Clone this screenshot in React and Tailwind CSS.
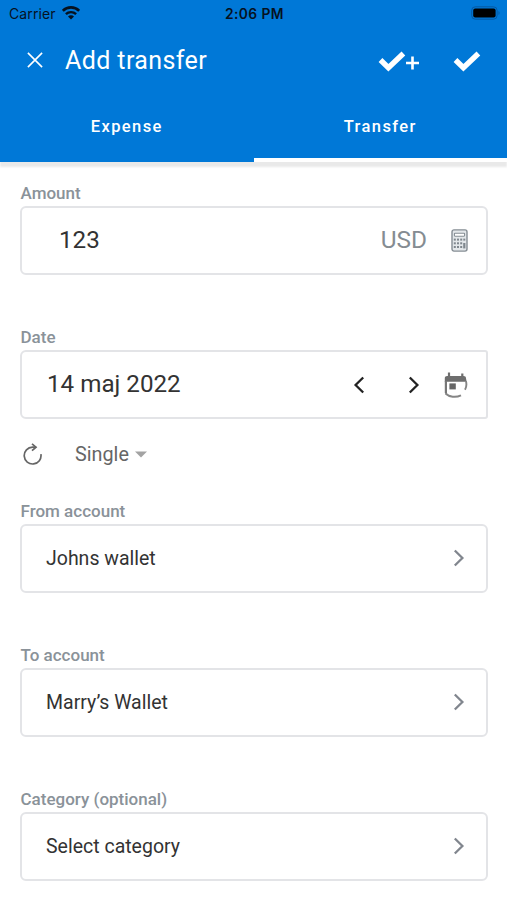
import React from 'react';

const WifiIcon = () => (
  <svg width="18" height="14" viewBox="0 0 18 14" fill="none" stroke="#06121f">
    <path d="M.8 4.900a11.500 11.500 0 0 1 16.400 0" strokeWidth="2.7" />
    <path d="M3.900 8.200a7.200 7.200 0 0 1 10.200 0" strokeWidth="2.4" />
    <path d="M9 13.400 6 10.400a4.200 4.200 0 0 1 6 0z" fill="#06121f" stroke="none" />
  </svg>
);

const BatteryIcon = () => (
  <svg width="29" height="14" viewBox="0 0 29 14">
    <rect x="0.7" y="0.8" width="25.4" height="12.4" rx="3.6" fill="none" stroke="#0559a3" />
    <rect x="2.2" y="2.4" width="22.4" height="9.2" rx="2" fill="#000" />
    <path d="M27.500 5v4c1.400-.6 1.400-3.400 0-4z" fill="#0559a3" />
  </svg>
);

const CloseIcon = () => (
  <svg width="16" height="16" viewBox="0 0 16 16" fill="none" stroke="#fff" strokeWidth="1.6">
    <path d="M.9.9l14.200 14.200M15.100.9.9 15.100" />
  </svg>
);

const CheckIcon = () => (
  <svg width="28" height="21" viewBox="0 0 28 21" fill="none" stroke="#fff" strokeWidth="5.4">
    <path d="M2.500 9l7.900 7.700L25.400 2.500" strokeLinejoin="miter" />
  </svg>
);

const PlusIcon = () => (
  <svg width="14" height="14" viewBox="0 0 14 14" stroke="#fff" strokeWidth="2.6">
    <path d="M6.500 .5v13M0 7h13" />
  </svg>
);

const CalculatorIcon = () => (
  <svg width="17" height="23" viewBox="0 0 17 23" fill="none" stroke="#858d94">
    <rect x="1" y="0.9" width="15" height="21.2" rx="2" fill="#e3e7ea" strokeWidth="1.4" />
    <rect x="3.4" y="4.2" width="10.2" height="3" rx="0.6" fill="#fff" strokeWidth="1.1" />
    <g fill="#7f878e" stroke="none">
      <rect x="2.8" y="9.6" width="2" height="2" />
      <rect x="6" y="9.6" width="2" height="2" />
      <rect x="9.2" y="9.6" width="2" height="2" />
      <rect x="12.3" y="9.6" width="2" height="2" />
      <rect x="2.8" y="13.3" width="2" height="2" />
      <rect x="6" y="13.3" width="2" height="2" />
      <rect x="9.2" y="13.3" width="2" height="2" />
      <rect x="2.8" y="17" width="2" height="2" />
      <rect x="6" y="17" width="2" height="2" />
      <rect x="9.2" y="17" width="2" height="2" />
      <rect x="12.2" y="14" width="2.2" height="5.4" />
    </g>
  </svg>
);

const CalendarIcon = () => (
  <svg width="24" height="26" viewBox="0 0 24 26">
    <path d="M.8 6.200c0-1.300 1-2.200 2.300-2.200h16.600c1.300 0 2.300.9 2.300 2.200l.6 3.600H.8z" fill="#6e6e6e" />
    <path d="M5 .6v4M18.300 1.400v3" stroke="#6e6e6e" strokeWidth="2.200" />
    <path d="M.8 9v12l2.200 2.300V9z" fill="#777" />
    <path d="M1.500 21.500c3.800 3.600 10.200 4.300 15.500 1.800" stroke="#858585" strokeWidth="2" fill="none" />
    <path d="M21.900 9c.8 2.800.6 6-.9 8.700" stroke="#858585" strokeWidth="1.900" fill="none" />
    <rect x="5.4" y="11.4" width="6.4" height="6" fill="#666" />
  </svg>
);

const RepeatIcon = () => (
  <svg width="20" height="22" viewBox="0 0 20 22" fill="none" stroke="#666" strokeWidth="1.7">
    <path d="M17.900 11.200a8.400 8.400 0 1 1-8.400-7h3.700" />
    <path d="M9 .8l4 3.400-4 3.500" />
  </svg>
);

const Chevron = ({ left, color }) => (
  <svg width="12" height="18" viewBox="0 0 12 18" fill="none" stroke={color} strokeWidth="2.3">
    <path d={left ? 'M10.200 1.500 2.600 9l7.600 7.500' : 'M1.800 1.500 9.400 9l-7.600 7.500'} />
  </svg>
);

const Field = ({ label, children, className, boxClassName = 'rounded-md' }) => (
  <div className={className}>
    <div className="h-6 pl-[0.5px] text-[17px] leading-[25px] font-medium whitespace-nowrap text-[#8a9299]">{label}</div>
    <div className={`mt-px flex h-[69px] items-center border-2 border-[#e3e4e7] text-[#333] ${boxClassName}`}>
      {children}
    </div>
  </div>
);

const SelectField = ({ label, value, className }) => (
  <Field label={label} className={className}>
    <span className="pl-6 text-[19.5px]">{value}</span>
    <span className="ml-auto pr-[21px] pb-0.5">
      <Chevron color="#81868e" />
    </span>
  </Field>
);

const App = () => {
  return (
    <div className="h-[900px] w-[507px] overflow-hidden bg-white font-['Roboto',sans-serif]">
      <header className="flex h-[162px] flex-col bg-[#0078d7] text-white shadow-[0_5px_2px_#e9e9e9]">
        <div className="grid h-7 grid-cols-3 items-center pr-[7px] pl-[9px] font-['Inter',sans-serif] text-[#06121f]">
          <div className="-mt-0.5 flex items-center gap-1.5">
            <span className="pt-px text-[14px] tracking-[0.1px]">Carrier</span>
            <WifiIcon />
          </div>
          <span className="text-center text-[13.8px] font-semibold tracking-[0.4px]">2:06 PM</span>
          <div className="-mt-0.5 flex justify-end">
            <BatteryIcon />
          </div>
        </div>

        <div className="flex h-16 items-center pr-[26px] pl-[27px]">
          <CloseIcon />
          <h1 className="pt-px pl-[22px] text-[25px] tracking-[0.4px]">Add transfer</h1>
          <div className="ml-auto flex items-center pt-0.5">
            <CheckIcon />
            <span className="pt-[3px]">
              <PlusIcon />
            </span>
          </div>
          <div className="pt-0.5 pl-[33px]">
            <CheckIcon />
          </div>
        </div>

        <div className="grid flex-1 grid-cols-2 text-center text-[16.5px] leading-[70px] font-medium tracking-[1.4px]">
          <div className="h-[70px]">Expense</div>
          <div className="h-[70px] border-b-4 border-white">Transfer</div>
        </div>
      </header>

      <main className="pt-[19px] pr-[19px] pl-5">
        <Field label="Amount">
          <span className="-mt-px pl-[37px] text-[24.2px]">123</span>
          <span className="ml-auto text-[24.4px] text-[#858c92]">USD</span>
          <span className="pr-[18px] pl-6">
            <CalculatorIcon />
          </span>
        </Field>

        <Field label="Date" className="mt-[50px]" boxClassName="rounded-l-md rounded-r-[3px]">
          <span className="pl-[25px] text-[24.2px]">14 maj 2022</span>
          <div className="ml-auto flex items-center pr-[18px]">
            <Chevron left color="#222" />
            <span className="pl-[43px]">
              <Chevron color="#222" />
            </span>
            <span className="pl-6">
              <CalendarIcon />
            </span>
          </div>
        </Field>

        <div className="flex h-[70px] items-center pl-[3px] text-[#666]">
          <RepeatIcon />
          <span className="pt-px pl-8 text-[19.8px]">Single</span>
          <svg className="ml-1.5" width="12" height="7" viewBox="0 0 12 7">
            <path d="M0 .5h12l-6 6z" fill="#a3a3a3" />
          </svg>
        </div>

        <SelectField label="From account" value="Johns wallet" className="mt-[10px]" />
        <SelectField label="To account" value="Marry’s Wallet" className="mt-[50px]" />
        <SelectField label="Category (optional)" value="Select category" className="mt-[50px]" />
      </main>
    </div>
  );
};

export default App;
